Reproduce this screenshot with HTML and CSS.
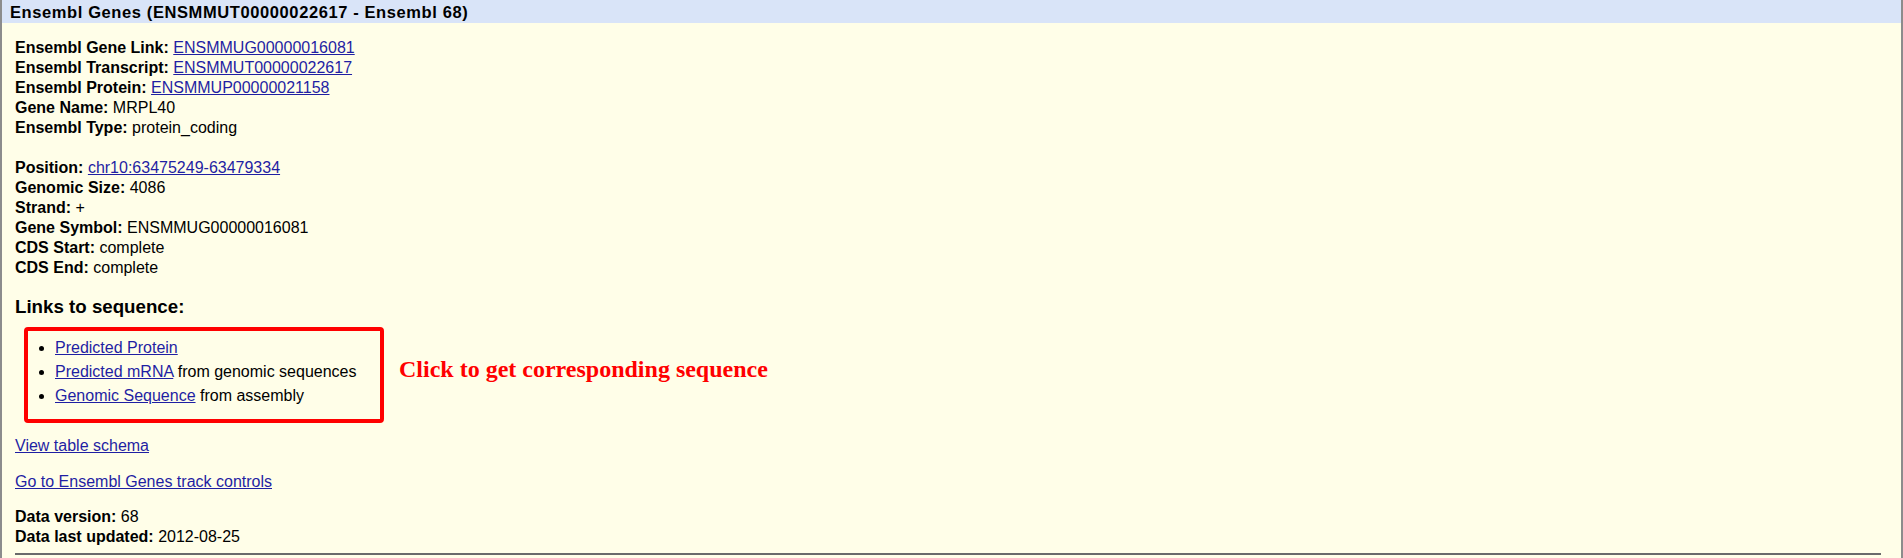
FILE: index.html
```html
<!DOCTYPE html>
<html>
<head>
<meta charset="utf-8">
<title>Ensembl Genes</title>
<link rel="stylesheet" href="styles.css">
</head>
<body>
<div class="page">
  <div class="title">Ensembl Genes (ENSMMUT00000022617 - Ensembl 68)</div>
  <div class="content">
    <div class="group">
      <div class="line"><b>Ensembl Gene Link:</b> <a href="#">ENSMMUG00000016081</a></div>
      <div class="line"><b>Ensembl Transcript:</b> <a href="#">ENSMMUT00000022617</a></div>
      <div class="line"><b>Ensembl Protein:</b> <a href="#">ENSMMUP00000021158</a></div>
      <div class="line"><b>Gene Name:</b> MRPL40</div>
      <div class="line"><b>Ensembl Type:</b> protein_coding</div>
    </div>
    <div class="group group-gap">
      <div class="line"><b>Position:</b> <a href="#">chr10:63475249-63479334</a></div>
      <div class="line"><b>Genomic Size:</b> 4086</div>
      <div class="line"><b>Strand:</b> +</div>
      <div class="line"><b>Gene Symbol:</b> ENSMMUG00000016081</div>
      <div class="line"><b>CDS Start:</b> complete</div>
      <div class="line"><b>CDS End:</b> complete</div>
    </div>
    <h3 class="heading">Links to sequence:</h3>
    <div class="seq-row">
      <div class="seq-box">
        <ul class="seq-list">
          <li><a href="#">Predicted Protein</a></li>
          <li><a href="#">Predicted mRNA</a> from genomic sequences</li>
          <li><a href="#">Genomic Sequence</a> from assembly</li>
        </ul>
      </div>
      <div class="note">Click to get corresponding sequence</div>
    </div>
    <div class="line schema"><a href="#">View table schema</a></div>
    <div class="line controls"><a href="#">Go to Ensembl Genes track controls</a></div>
    <div class="group data">
      <div class="line"><b>Data version:</b> 68</div>
      <div class="line"><b>Data last updated:</b> 2012-08-25</div>
    </div>
    <hr class="rule">
  </div>
</div>
</body>
</html>
```
FILE: styles.css
```css
html, body {
  margin: 0;
  padding: 0;
  background: #fffee8;
}
body {
  font-family: "Liberation Sans", Arial, sans-serif;
  font-size: 16px;
  color: #000;
}
.page {
  width: 1903px;
  box-sizing: border-box;
  min-height: 558px;
  border-left: 2px solid #8c8c8c;
  border-right: 2px solid #8c8c8c;
  background: #fffee8;
}
.title {
  background: #d9e4f8;
  height: 23px;
  box-sizing: border-box;
  padding: 2px 0 0 8px;
  line-height: 21px;
  font-weight: bold;
  font-size: 16.5px;
  letter-spacing: 0.6px;
}
.content {
  padding: 15px 20px 0 13px;
}
.line {
  line-height: 20px;
}
b {
  font-weight: bold;
}
a {
  color: #1f1fa3;
  text-decoration: underline;
}
.group-gap {
  margin-top: 20px;
}
.heading {
  margin: 18px 0 0 0;
  font-size: 18.72px;
  line-height: 22px;
  font-weight: bold;
}
.seq-row {
  display: flex;
  align-items: flex-start;
  margin-top: 9px;
}
.seq-box {
  margin-left: 9px;
  width: 360px;
  height: 96px;
  box-sizing: border-box;
  border: 4px solid #ff0000;
  border-radius: 4px;
}
.seq-list {
  margin: 0;
  padding: 5px 0 0 27px;
  list-style: disc;
}
.seq-list li {
  line-height: 24px;
}
.note {
  margin: 28.5px 0 0 15px;
  font-family: "Liberation Serif", "Times New Roman", serif;
  font-weight: bold;
  font-size: 24px;
  line-height: 27px;
  color: #ff0000;
}
.schema {
  margin-top: 12.5px;
}
.controls {
  margin-top: 16px;
}
.data {
  margin-top: 15px;
}
.rule {
  margin: 6.5px 0 0 0;
  height: 0;
  border: 0;
  border-top: 2px solid #6a6a6a;
}
```
